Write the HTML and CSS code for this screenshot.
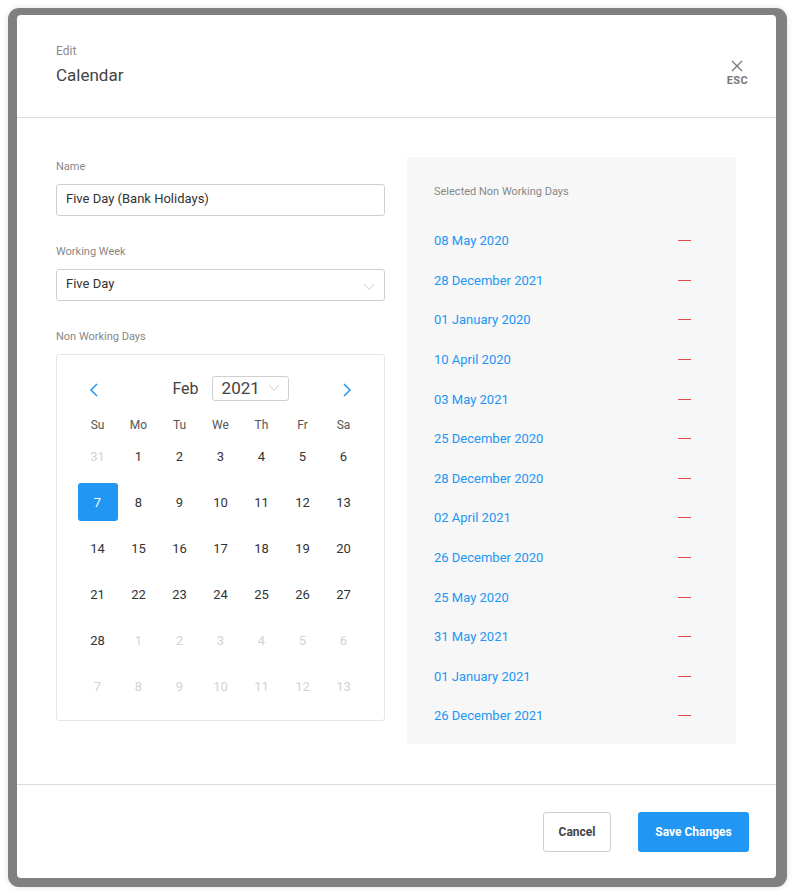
FILE: index.html
```html
<!DOCTYPE html>
<html lang="en">
<head>
    <meta charset="UTF-8">
    <title>Edit Calendar</title>
    <link rel="stylesheet" href="styles.css">
</head>
<body>
    <div class="frame">
        <div class="modal">
            <!-- Header -->
            <div class="modal-header">
                <div class="titles">
                    <div class="subtitle">Edit</div>
                    <div class="title">Calendar</div>
                </div>
                <button type="button" class="close-btn">
                    <svg width="12" height="12" viewBox="0 0 12 12"><path d="M1 1L11 11M11 1L1 11" stroke="#777" stroke-width="1.3" fill="none"/></svg>
                    <span>ESC</span>
                </button>
            </div>

            <!-- Body -->
            <div class="modal-body">
                <div class="col-left">
                    <div class="form-group">
                        <label>Name</label>
                        <div class="input">Five Day (Bank Holidays)</div>
                    </div>
                    <div class="form-group">
                        <label>Working Week</label>
                        <div class="input select">
                            <span>Five Day</span>
                            <svg width="12" height="8" viewBox="0 0 12 8"><path d="M1 1L6 6.5L11 1" stroke="#ccc" stroke-width="1" fill="none"/></svg>
                        </div>
                    </div>
                    <div class="form-group">
                        <label>Non Working Days</label>
                        <div class="calendar">
                            <div class="cal-header">
                                <svg class="nav" width="10" height="14" viewBox="0 0 10 14"><path d="M8 1L2 7L8 13" stroke="#2196f3" stroke-width="1.5" fill="none"/></svg>
                                <div class="cal-month">
                                    <span class="month">Feb</span>
                                    <div class="year-select">
                                        <span>2021</span>
                                        <svg width="12" height="8" viewBox="0 0 12 8"><path d="M1 1L6 6.5L11 1" stroke="#ccc" stroke-width="1" fill="none"/></svg>
                                    </div>
                                </div>
                                <svg class="nav" width="10" height="14" viewBox="0 0 10 14"><path d="M2 1L8 7L2 13" stroke="#2196f3" stroke-width="1.5" fill="none"/></svg>
                            </div>
                            <div class="cal-grid weekdays">
                                <span>Su</span><span>Mo</span><span>Tu</span><span>We</span><span>Th</span><span>Fr</span><span>Sa</span>
                            </div>
                            <div class="cal-grid days" id="days"></div>
                        </div>
                    </div>
                </div>

                <div class="col-right">
                    <div class="panel-title">Selected Non Working Days</div>
                    <ul class="day-list" id="dayList"></ul>
                </div>
            </div>

            <!-- Footer -->
            <div class="modal-footer">
                <button type="button" class="btn btn-cancel">Cancel</button>
                <button type="button" class="btn btn-save">Save Changes</button>
            </div>
        </div>
    </div>

    <script>
        // build the month grid: Feb 2021 starts on Monday
        var days = document.getElementById('days');
        var cells = [{ n: 31, muted: true }];
        for (var i = 1; i <= 28; i++) cells.push({ n: i });
        for (var j = 1; j <= 13; j++) cells.push({ n: j, muted: true });
        cells.forEach(function (c) {
            var el = document.createElement('span');
            el.className = 'day' + (c.muted ? ' muted' : '') + (!c.muted && c.n === 7 ? ' selected' : '');
            el.innerHTML = '<i>' + c.n + '</i>';
            days.appendChild(el);
        });

        var selected = [
            '08 May 2020', '28 December 2021', '01 January 2020', '10 April 2020',
            '03 May 2021', '25 December 2020', '28 December 2020', '02 April 2021',
            '26 December 2020', '25 May 2020', '31 May 2021', '01 January 2021',
            '26 December 2021'
        ];
        var list = document.getElementById('dayList');
        selected.forEach(function (d) {
            var li = document.createElement('li');
            li.innerHTML = '<a href="#">' + d + '</a><span class="remove"></span>';
            list.appendChild(li);
        });
    </script>
</body>
</html>
```

FILE: styles.css
```css
body {
    margin: 0;
    background: #fff;
    font-family: Roboto, "Noto Sans", sans-serif;
    color: #333;
}

.frame {
    margin: 8px;
    width: 759px;
    height: 863px;
    padding: 7px 11px 9px 9px;
    background: #808080;
    border-radius: 11px;
    box-shadow: 0 0 6px rgba(0, 0, 0, 0.12);
}

.modal {
    height: 100%;
    background: #fff;
    border-radius: 4px;
    display: flex;
    flex-direction: column;
}

.modal-header {
    height: 103px;
    box-sizing: border-box;
    border-bottom: 1px solid #dcdcdc;
    padding: 28px 28px 0 39px;
    display: flex;
    justify-content: space-between;
    align-items: flex-start;
}

.subtitle {
    font-size: 12px;
    color: #8a8a8a;
    line-height: 16px;
}

.title {
    font-size: 17px;
    color: #444;
    margin-top: 6px;
    line-height: 20px;
}

.close-btn {
    border: none;
    background: none;
    padding: 0;
    margin-top: 17px;
    display: flex;
    flex-direction: column;
    align-items: center;
    font-family: inherit;
    font-size: 11px;
    font-weight: 700;
    color: #777;
    letter-spacing: 0.4px;
}

.close-btn span {
    margin-top: 2px;
    line-height: 14px;
}

.modal-body {
    flex: 1;
    padding: 42px 40px 0 39px;
    display: flex;
    gap: 22px;
    border-bottom: 1px solid #dcdcdc;
}

.col-left {
    width: 329px;
}

.form-group {
    margin-bottom: 29px;
}

label {
    display: block;
    font-size: 11px;
    color: #888;
    line-height: 14px;
    margin-bottom: 10px;
}

.input {
    height: 32px;
    box-sizing: border-box;
    border: 1px solid #cfcfcf;
    border-radius: 3px;
    padding: 0 9px 3px 9px;
    font-size: 13px;
    color: #333;
    display: flex;
    align-items: center;
    justify-content: space-between;
}

.input svg {
    margin-top: 6px;
}

.calendar {
    border: 1px solid #e6e6e6;
    border-radius: 3px;
    height: 367px;
    box-sizing: border-box;
    padding: 20px 20px 0 20px;
}

.cal-header {
    height: 26px;
    display: flex;
    align-items: center;
    justify-content: space-between;
    padding: 0 12px 0 12px;
}

.nav {
    margin-top: 4px;
}

.cal-month {
    display: flex;
    align-items: center;
    gap: 13px;
    margin-left: 20px;
}

.month {
    font-size: 16px;
    color: #444;
}

.year-select {
    width: 77px;
    height: 25px;
    box-sizing: border-box;
    border: 1px solid #cfcfcf;
    border-radius: 3px;
    display: flex;
    align-items: center;
    gap: 8px;
    padding-left: 9px;
    font-size: 17px;
    color: #444;
}

.cal-grid {
    display: grid;
    grid-template-columns: repeat(7, 41px);
}

.weekdays {
    margin-top: 15px;
    height: 17px;
    align-items: center;
    font-size: 12px;
    color: #555;
    text-align: center;
}

.day {
    height: 46px;
    display: flex;
    align-items: center;
    justify-content: center;
    font-size: 13px;
    color: #333;
}

.day i {
    font-style: normal;
    width: 40px;
    height: 38px;
    display: flex;
    align-items: center;
    justify-content: center;
    border-radius: 3px;
}

.day.muted {
    color: #d3d3d3;
}

.day.selected i {
    background: #2196f3;
    color: #fff;
}

.col-right {
    width: 329px;
    height: 587px;
    margin-top: -3px;
    background: #f7f7f7;
    box-sizing: border-box;
    padding: 28px 45px 0 27px;
}

.panel-title {
    font-size: 11px;
    color: #888;
    line-height: 14px;
}

.day-list {
    list-style: none;
    margin: 22px 0 0 0;
    padding: 0;
}

.day-list li {
    height: 39.6px;
    display: flex;
    align-items: center;
    justify-content: space-between;
}

.day-list a {
    font-size: 13px;
    color: #2196f3;
    text-decoration: none;
}

.remove {
    width: 13px;
    height: 0;
    border-top: 1px solid #e94848;
}

.modal-footer {
    height: 93px;
    box-sizing: border-box;
    padding: 27px 27px 0 0;
    display: flex;
    justify-content: flex-end;
    align-items: flex-start;
    gap: 27px;
}

.btn {
    height: 40px;
    border-radius: 3px;
    font-family: inherit;
    font-size: 12px;
    font-weight: 700;
    cursor: pointer;
}

.btn-cancel {
    width: 68px;
    background: #fff;
    border: 1px solid #cfcfcf;
    color: #444;
}

.btn-save {
    width: 111px;
    background: #2196f3;
    border: none;
    color: #fff;
}
```
